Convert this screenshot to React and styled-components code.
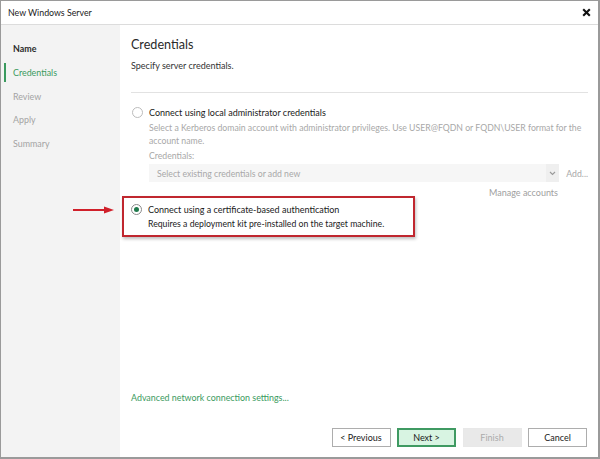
import React, { useState } from "react";
import styled, { createGlobalStyle } from "styled-components";

const Global = createGlobalStyle`
  html, body { margin: 0; padding: 0; background: #fff; }
  body { font-family: Lato, "Noto Sans", sans-serif; color: #222; }
`;

const Window = styled.div`
  width: 600px;
  height: 459px;
  box-sizing: border-box;
  border: 1px solid #9a9a9a;
  border-right-width: 2px;
  border-bottom-width: 2px;
  display: flex;
  flex-direction: column;
  background: #fff;
`;

const TitleBar = styled.div`
  height: 24px;
  box-sizing: border-box;
  flex: none;
  display: flex;
  align-items: center;
  justify-content: space-between;
  padding: 0 7px 0 7px;
  border-bottom: 1px solid #dcdcdc;
  font-size: 8.8px;
  color: #1a1a1a;
`;

const CloseIcon = styled.svg`
  margin-top: -1px;
`;

const Body = styled.div`
  flex: 1;
  display: flex;
  min-height: 0;
`;

const Sidebar = styled.nav`
  width: 119px;
  flex: none;
  background: #f3f3f3;
  padding-top: 12px;
  display: flex;
  flex-direction: column;
`;

const Step = styled.div`
  height: 23.7px;
  display: flex;
  align-items: center;
  padding-left: 12px;
  font-size: 8.9px;
  position: relative;
  color: ${(p) => (p.$active ? "#3a9a5e" : p.$done ? "#2a2a2a" : "#a3a3a3")};
  font-weight: ${(p) => (p.$done ? 700 : 400)};
  &::before {
    content: "";
    display: ${(p) => (p.$active ? "block" : "none")};
    position: absolute;
    left: 3px;
    top: 2px;
    bottom: 2px;
    width: 2px;
    background: #3a9a5e;
  }
`;

const Main = styled.main`
  flex: 1;
  display: flex;
  flex-direction: column;
  padding: 11px 10px 10px 11px;
`;

const Heading = styled.h1`
  margin: 0;
  font-size: 12.6px;
  line-height: 18px;
  font-weight: 400;
  color: #2a2a2a;
`;

const Sub = styled.p`
  margin: 5px 0 0;
  font-size: 9px;
  line-height: 14px;
  color: #333;
`;

const Divider = styled.hr`
  margin: 19px 0 0;
  border: none;
  border-top: 1px solid #e2e2e2;
`;

const Option = styled.div`
  display: flex;
  gap: 6px;
  align-items: flex-start;
`;

const Radio = styled.span`
  width: 11px;
  height: 11px;
  flex: none;
  border-radius: 50%;
  border: 1px solid ${(p) => (p.$checked ? "#8a8a8a" : "#bcbcbc")};
  box-sizing: border-box;
  margin-top: 1px;
  display: flex;
  align-items: center;
  justify-content: center;
  &::after {
    content: "";
    width: 5px;
    height: 5px;
    border-radius: 50%;
    background: #1f7a4c;
    display: ${(p) => (p.$checked ? "block" : "none")};
  }
`;

const OptionText = styled.div`
  flex: 1;
  display: flex;
  flex-direction: column;
`;

const OptionTitle = styled.div`
  font-size: 9px;
  line-height: 13px;
  color: #1a1a1a;
`;

const OptionDesc = styled.div`
  font-size: 8.7px;
  line-height: 13px;
  color: ${(p) => (p.$muted ? "#a8a8a8" : "#222")};
  margin-top: ${(p) => (p.$muted ? 2 : 1)}px;
`;

const FirstOption = styled(Option)`
  margin-top: 13px;
  padding-left: 1px;
`;

const FieldLabel = styled.div`
  font-size: 8.7px;
  line-height: 13px;
  color: #a8a8a8;
  margin-top: 2px;
`;

const FieldRow = styled.div`
  display: flex;
  align-items: center;
  margin-top: 2px;
  gap: 7px;
`;

const Select = styled.div`
  flex: 1;
  height: 18px;
  background: #f6f6f6;
  display: flex;
  align-items: stretch;
  justify-content: space-between;
  font-size: 8.7px;
  color: #a8a8a8;
`;

const SelectText = styled.span`
  display: flex;
  align-items: center;
  padding-left: 8px;
`;

const SelectToggle = styled.span`
  width: 13px;
  display: flex;
  align-items: center;
  justify-content: center;
  background: #efefef;
`;

const Add = styled.span`
  font-size: 8.7px;
  color: #a8a8a8;
`;

const Manage = styled.div`
  align-self: flex-end;
  margin: 4px 30px 0 0;
  font-size: 9px;
  line-height: 13px;
  color: #a0a0a0;
`;

const Highlight = styled.div`
  position: relative;
  margin: -3px 0 0 -9px;
  width: 293px;
  height: 41px;
  box-sizing: border-box;
  border: 2px solid #c0272f;
  box-shadow: 1px 2px 3px rgba(0, 0, 0, 0.25);
  padding: 5px 0 0 7px;
`;

const Arrow = styled.svg`
  position: absolute;
  left: -51px;
  top: 8px;
`;

const Spacer = styled.div`
  flex: 1;
`;

const Link = styled.a`
  font-size: 8.9px;
  line-height: 13px;
  color: #3a9a5e;
  text-decoration: none;
  cursor: pointer;
`;

const Footer = styled.div`
  display: flex;
  justify-content: flex-end;
  gap: 6.5px;
  margin-top: 24px;
  padding-right: 1px;
`;

const Button = styled.button`
  width: 59px;
  height: 19px;
  box-sizing: border-box;
  font-family: inherit;
  font-size: 9px;
  padding: 0;
  border: ${(p) => (p.$primary ? "2px solid #3f9a62" : p.disabled ? "1px solid #e8e8e8" : "1px solid #adadad")};
  background: ${(p) => (p.$primary ? "#d8f4e2" : p.disabled ? "#e9e9e9" : "#fff")};
  color: ${(p) => (p.disabled ? "#ababab" : "#1a1a1a")};
`;

export default function App() {
  const [mode, setMode] = useState("cert");
  const steps = ["Name", "Credentials", "Review", "Apply", "Summary"];

  return (
    <Window>
      <Global />
      <TitleBar>
        <span>New Windows Server</span>
        <CloseIcon width="9" height="9" viewBox="0 0 9 9">
          <path d="M1.2 1.2 L7.8 7.8 M7.8 1.2 L1.2 7.8" stroke="#111" strokeWidth="2.1" />
        </CloseIcon>
      </TitleBar>
      <Body>
        <Sidebar>
          {steps.map((s, i) => (
            <Step key={s} $done={i === 0} $active={i === 1}>
              {s}
            </Step>
          ))}
        </Sidebar>
        <Main>
          <Heading>Credentials</Heading>
          <Sub>Specify server credentials.</Sub>
          <Divider />
          <FirstOption onClick={() => setMode("local")}>
            <Radio $checked={mode === "local"} />
            <OptionText>
              <OptionTitle>Connect using local administrator credentials</OptionTitle>
              <OptionDesc $muted>
                Select a Kerberos domain account with administrator privileges. Use
                USER@FQDN or FQDN\USER format for the account name.
              </OptionDesc>
              <FieldLabel>Credentials:</FieldLabel>
              <FieldRow>
                <Select>
                  <SelectText>Select existing credentials or add new</SelectText>
                  <SelectToggle>
                    <svg width="7" height="5" viewBox="0 0 7 5">
                      <path d="M1 1 L3.5 3.5 L6 1" fill="none" stroke="#9a9a9a" strokeWidth="1.1" />
                    </svg>
                  </SelectToggle>
                </Select>
                <Add>Add...</Add>
              </FieldRow>
            </OptionText>
          </FirstOption>
          <Manage>Manage accounts</Manage>
          <Highlight>
            <Arrow width="42" height="8" viewBox="0 0 42 8">
              <path d="M0 4 H33" stroke="#d0202a" strokeWidth="2" />
              <path d="M31 0.5 L41 4 L31 7.5 Z" fill="#d0202a" />
            </Arrow>
            <Option onClick={() => setMode("cert")}>
              <Radio $checked={mode === "cert"} />
              <OptionText>
                <OptionTitle>Connect using a certificate-based authentication</OptionTitle>
                <OptionDesc>Requires a deployment kit pre-installed on the target machine.</OptionDesc>
              </OptionText>
            </Option>
          </Highlight>
          <Spacer />
          <Link>Advanced network connection settings...</Link>
          <Footer>
            <Button>&lt; Previous</Button>
            <Button $primary>Next &gt;</Button>
            <Button disabled>Finish</Button>
            <Button>Cancel</Button>
          </Footer>
        </Main>
      </Body>
    </Window>
  );
}
